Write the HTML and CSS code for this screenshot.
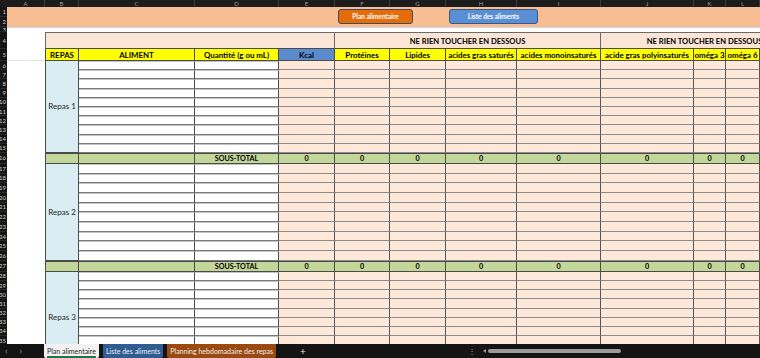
FILE: index.html
```html
<!DOCTYPE html>
<html lang="fr">
<head>
    <meta charset="UTF-8">
    <meta name="viewport" content="width=device-width, initial-scale=1.0">
    <title>Plan alimentaire</title>
    <link rel="stylesheet" href="styles.css">
</head>
<body>
    <div class="sheet">
        <div class="grid" id="grid"></div>

        <!-- boutons posés sur la bande orange -->
        <button class="sheet-button btn-plan">Plan alimentaire</button>
        <button class="sheet-button btn-liste">Liste des aliments</button>
    </div>

    <div class="tabbar">
        <div class="tab-nav">
            <span>&lsaquo;</span>
            <span>&rsaquo;</span>
        </div>
        <div class="tab tab-active">Plan alimentaire</div>
        <div class="tab tab-blue">Liste des aliments</div>
        <div class="tab tab-brown">Planning hebdomadaire des repas</div>
        <div class="tab-add">+</div>
        <div class="tab-dots">&#8942;</div>
        <div class="scrollbar">
            <span class="scroll-arrow"></span>
            <span class="scroll-thumb"></span>
        </div>
    </div>

    <script>
        const grid = document.getElementById('grid');
        const lettres = ['A','B','C','D','E','F','G','H','I','J','K','L','M'];
        const entetes = ['REPAS', 'ALIMENT', 'Quantité (g ou mL)', 'Kcal', 'Protéines', 'Lipides',
            'acides gras saturés', 'acides monoinsaturés', 'acide gras polyinsaturés', 'oméga 3', 'oméga 6', ''];

        // ligne = ligne de la feuille (1 = ligne 1), col = colonne de la grille (2 = A)
        function cell(classe, ligne, col, texte = '', hauteur = 1, largeur = 1) {
            const d = document.createElement('div');
            d.className = 'cell ' + classe;
            d.style.gridArea = `${ligne + 1} / ${col} / span ${hauteur} / span ${largeur}`;
            d.textContent = texte;
            grid.appendChild(d);
        }

        // en-têtes de colonnes
        cell('corner', 0, 1);
        lettres.forEach((l, i) => cell('col-letter', 0, i + 2, l));

        // numéros de lignes
        for (let r = 1; r <= 37; r++) cell('row-num', r, 1, r);

        // bande orange + ligne vide
        cell('band', 1, 2, '', 2, 13);
        cell('gap', 3, 2, '', 1, 13);

        // ligne du haut
        cell('blank', 4, 2);
        cell('top top-first', 4, 3, '', 1, 4);
        cell('top', 4, 7, 'NE RIEN TOUCHER EN DESSOUS', 1, 4);
        cell('top', 4, 11, 'NE RIEN TOUCHER EN DESSOUS', 1, 4);

        // en-têtes
        cell('blank blank-line', 5, 2);
        entetes.forEach((t, i) => {
            const classe = t === 'Kcal' ? 'head head-kcal' : 'head';
            cell(classe + (i === 0 ? ' first' : ''), 5, i + 3, t);
        });

        // blocs de repas
        function repas(debut, numero) {
            cell('blank', debut, 2, '', 10);
            cell('meal first', debut, 3, 'Repas ' + numero, 10);
            for (let r = debut; r < debut + 10; r++) {
                cell('input', r, 4);
                cell('input', r, 5);
                for (let c = 6; c <= 14; c++) cell('calc', r, c);
            }
        }

        function sousTotal(ligne) {
            cell('blank', ligne, 2);
            cell('total first', ligne, 3);
            cell('total', ligne, 4);
            cell('total', ligne, 5, 'SOUS-TOTAL');
            for (let c = 6; c <= 14; c++) cell('total', ligne, c, '0');
        }

        repas(6, 1);
        sousTotal(16);
        repas(17, 2);
        sousTotal(27);
        repas(28, 3);
    </script>
</body>
</html>
```

FILE: styles.css
```css
body {
    margin: 0;
    background-color: #141414;
    font-family: Lato, "Noto Sans", sans-serif;
    width: 760px;
    height: 358px;
    overflow: hidden;
}
.sheet {
    position: relative;
    height: 344px;
    overflow: hidden;
    background-color: #fff;
}
.grid {
    display: grid;
    grid-template-columns: 7px 38px 34px 116px 84px 56px 55px 56px 71px 84px 93px 32px 34px 49px;
    grid-template-rows: 7px 10px 10px 5px 17px 12px repeat(10, 9.2px) 11px repeat(10, 9.7px) 11px repeat(10, 9.2px);
    width: 809px;
}
.cell {
    box-sizing: border-box;
    overflow: hidden;
    white-space: nowrap;
    display: flex;
    align-items: center;
    justify-content: center;
    font-size: 7.9px;
    color: #000;
}
.corner {
    background-color: #1c1c1c;
}
.col-letter {
    background-color: #1c1c1c;
    color: #9b9b9b;
    font-size: 6px;
    border-right: 1px solid #3a3a3a;
    align-items: flex-end;
    line-height: 6px;
}
.row-num {
    background-color: #151515;
    color: #cfcfcf;
    font-size: 6px;
    justify-content: flex-end;
    padding-right: 1px;
    border-bottom: 1px solid #2a2a2a;
}
.band {
    background-color: #f7be93;
}
.gap {
    background-color: #fff;
    border-top: 1px solid #cdd9e8;
}
.blank {
    background-color: #fff;
}
.blank-line {
    border-bottom: 1px solid #e2e2e2;
}
.top {
    background-color: #fbe5d6;
    border-top: 1px solid #6a6a6a;
    border-right: 1px solid #6a6a6a;
    border-bottom: 1px solid #4a4a4a;
    font-weight: bold;
    font-size: 7.6px;
}
.top-first {
    border-left: 1px solid #6a6a6a;
}
.head {
    background-color: #ffff00;
    font-weight: bold;
    border-right: 1px solid #4a4a4a;
    border-bottom: 1px solid #4a4a4a;
}
.head-kcal {
    background-color: #5b8bcd;
}
.first {
    border-left: 1px solid #4a4a4a;
}
.meal {
    background-color: #daedf3;
    color: #262626;
    font-size: 8px;
    border-right: 1px solid #4a4a4a;
    border-bottom: 1px solid #4a4a4a;
}
.input {
    background-color: #fff;
    border-right: 1px solid #4a4a4a;
    border-bottom: 1px solid #7a7a7a;
    border-top: 1px solid #c4c4c4;
}
.calc {
    background-color: #fde8d9;
    border-right: 1px solid #555;
    border-bottom: 1px solid #8c8c8c;
}
.total {
    background-color: #c4d79b;
    font-weight: bold;
    font-size: 7.2px;
    border-right: 1px solid #4a4a4a;
    border-bottom: 1px solid #4a4a4a;
    border-top: 1px solid #4a4a4a;
}
.sheet-button {
    position: absolute;
    top: 9px;
    height: 15px;
    padding: 0;
    border-radius: 3px;
    color: #fff;
    font-family: Lato, "Noto Sans", sans-serif;
    font-size: 6.5px;
    font-weight: bold;
}
.btn-plan {
    left: 338px;
    width: 75px;
    background-color: #e46c0a;
    border: 1px solid #3e4c5e;
}
.btn-liste {
    left: 449px;
    width: 89px;
    background-color: #5a8fd6;
    border: 1px solid #39577f;
}
.tabbar {
    display: flex;
    align-items: stretch;
    height: 14px;
    background-color: #141414;
    font-size: 7px;
}
.tab-nav {
    display: flex;
    align-items: center;
    gap: 12px;
    width: 44px;
    padding-left: 5px;
    box-sizing: border-box;
    color: #9a9a9a;
    font-size: 9px;
    line-height: 12px;
}
.tab {
    display: flex;
    align-items: center;
    padding: 0 3px;
    margin-right: 4px;
    border-radius: 0 0 2px 2px;
    color: #f0f0f0;
}
.tab-active {
    background-color: #f2f2f2;
    color: #1f1f1f;
    text-decoration: underline;
    text-decoration-color: #217346;
    text-decoration-thickness: 1.5px;
    text-underline-offset: 2px;
}
.tab-blue {
    background-color: #2e5c93;
}
.tab-brown {
    background-color: #9a4910;
}
.tab-add {
    color: #e0e0e0;
    font-size: 10px;
    line-height: 14px;
    margin-left: 20px;
}
.tab-dots {
    color: #9a9a9a;
    font-size: 8px;
    line-height: 14px;
    margin-left: 162px;
}
.scrollbar {
    display: flex;
    align-items: center;
    margin-left: 7px;
    gap: 2px;
}
.scroll-arrow {
    width: 0;
    height: 0;
    border-top: 2.5px solid transparent;
    border-bottom: 2.5px solid transparent;
    border-right: 3px solid #9a9a9a;
}
.scroll-thumb {
    width: 133px;
    height: 4px;
    border-radius: 2px;
    background-color: #9b9b9b;
}
```
